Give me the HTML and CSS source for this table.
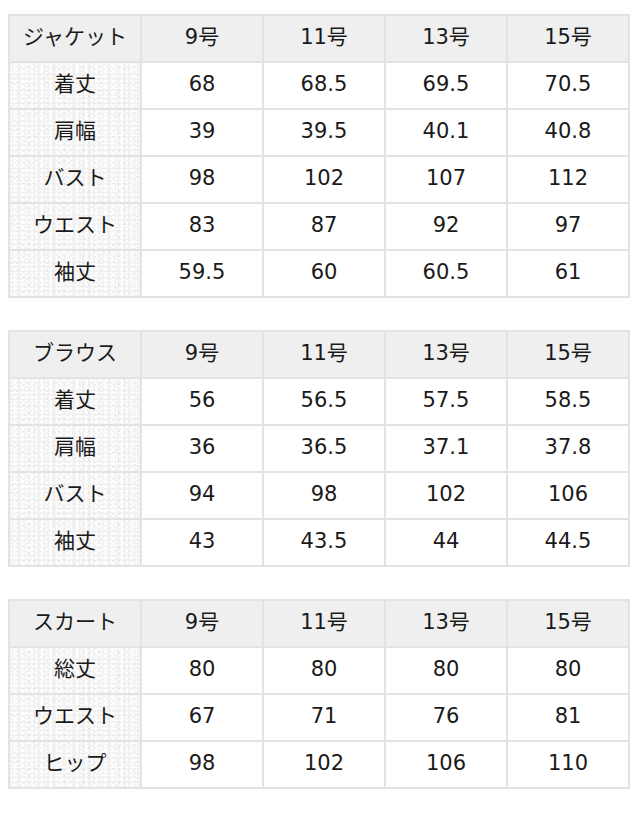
FILE: index.html
```
<!DOCTYPE html>
<html lang="ja">
<head>
<meta charset="utf-8">
<link rel="stylesheet" href="styles.css">
</head>
<body>
<div class="page">
<table class="size">
<tr class="head"><th class="label">ジャケット</th><th>9号</th><th>11号</th><th>13号</th><th>15号</th></tr>
<tr><th class="label">着丈</th><td>68</td><td>68.5</td><td>69.5</td><td>70.5</td></tr>
<tr><th class="label">肩幅</th><td>39</td><td>39.5</td><td>40.1</td><td>40.8</td></tr>
<tr><th class="label">バスト</th><td>98</td><td>102</td><td>107</td><td>112</td></tr>
<tr><th class="label">ウエスト</th><td>83</td><td>87</td><td>92</td><td>97</td></tr>
<tr><th class="label">袖丈</th><td>59.5</td><td>60</td><td>60.5</td><td>61</td></tr>
</table>
<table class="size">
<tr class="head"><th class="label">ブラウス</th><th>9号</th><th>11号</th><th>13号</th><th>15号</th></tr>
<tr><th class="label">着丈</th><td>56</td><td>56.5</td><td>57.5</td><td>58.5</td></tr>
<tr><th class="label">肩幅</th><td>36</td><td>36.5</td><td>37.1</td><td>37.8</td></tr>
<tr><th class="label">バスト</th><td>94</td><td>98</td><td>102</td><td>106</td></tr>
<tr><th class="label">袖丈</th><td>43</td><td>43.5</td><td>44</td><td>44.5</td></tr>
</table>
<table class="size">
<tr class="head"><th class="label">スカート</th><th>9号</th><th>11号</th><th>13号</th><th>15号</th></tr>
<tr><th class="label">総丈</th><td>80</td><td>80</td><td>80</td><td>80</td></tr>
<tr><th class="label">ウエスト</th><td>67</td><td>71</td><td>76</td><td>81</td></tr>
<tr><th class="label">ヒップ</th><td>98</td><td>102</td><td>106</td><td>110</td></tr>
</table>
</div>
</body>
</html>
```
FILE: styles.css
```
html, body {
  margin: 0;
  padding: 0;
  background: #ffffff;
}
.page {
  padding: 14px 8px 0 8px;
  display: flex;
  flex-direction: column;
  gap: 32px;
  font-family: "DejaVu Sans", "Noto Sans CJK JP", sans-serif;
  color: #1a1a1a;
}
.size {
  border-collapse: separate;
  border-spacing: 0;
  width: 622px;
  table-layout: fixed;
  border-top: 2px solid #e3e3e3;
  border-left: 2px solid #e3e3e3;
}
.size th, .size td {
  padding: 0 0 3px 0;
  height: 42px;
  line-height: 1;
  font-size: 21px;
  font-weight: normal;
  text-align: center;
  vertical-align: middle;
  border-right: 2px solid #e3e3e3;
  border-bottom: 2px solid #e3e3e3;
  background: #ffffff;
  overflow: hidden;
}
.size th.label {
  width: 130px;
  background-color: #f1f1f1;
  background-image:
    radial-gradient(circle at 30% 40%, #ffffff 0.9px, transparent 1.4px),
    radial-gradient(circle at 70% 20%, #ffffff 0.8px, transparent 1.3px),
    radial-gradient(circle at 50% 70%, #ffffff 1px, transparent 1.5px),
    radial-gradient(circle at 20% 80%, #e4e4e4 0.7px, transparent 1.2px);
  background-size: 5px 4px, 7px 6px, 9px 5px, 6px 7px;
}
.size .head th {
  background: #efefef;
}
.size .head th.label {
  background: #efefef;
}
```
